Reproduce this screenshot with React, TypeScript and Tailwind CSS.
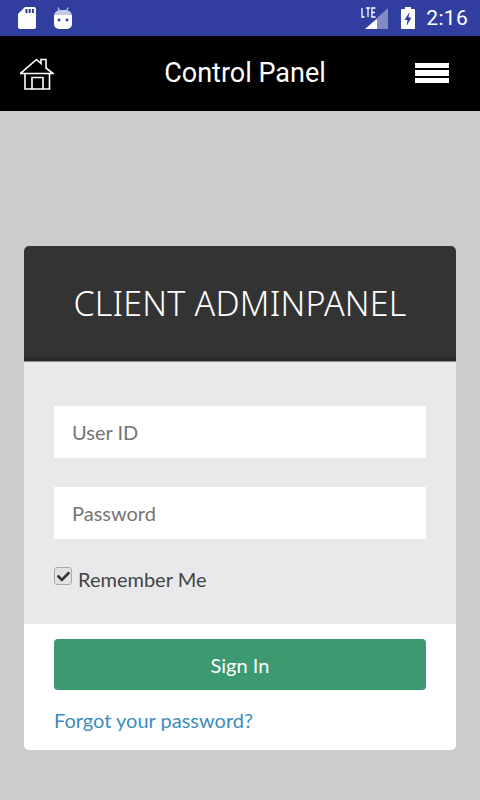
import { FaCheck } from 'react-icons/fa';

const StatusBar = () => (
  <div className="h-9 bg-[#303f9f] flex items-center justify-between pl-[18px] pr-3 text-white">
    <div className="flex items-center gap-[18px]">
      <svg width="18" height="22" viewBox="0 0 18 22" fill="#fff">
        <path d="M7 0h9a2 2 0 0 1 2 2v18a2 2 0 0 1-2 2H2a2 2 0 0 1-2-2V7z" />
        <rect x="7.5" y="2" width="2" height="4" fill="#303f9f" />
        <rect x="10.7" y="2" width="2" height="4" fill="#303f9f" />
        <rect x="13.9" y="2" width="2" height="4" fill="#303f9f" />
      </svg>
      <svg width="18" height="22" viewBox="0 0 18 22" fill="#fff">
        <path d="M4 0.5L5.5 4M14 0.5L12.5 4" stroke="#c5cae9" strokeWidth="1.2" fill="none" />
        <path d="M0 9a6 6 0 0 1 6-6h6a6 6 0 0 1 6 6z" fill="#c5cae9" />
        <path d="M0 8h18v9a5 5 0 0 1-5 5H5a5 5 0 0 1-5-5z" />
        <circle cx="5" cy="13" r="1.4" fill="#303f9f" />
        <circle cx="13" cy="13" r="1.4" fill="#303f9f" />
      </svg>
    </div>
    <div className="flex items-center">
      <svg width="27" height="22" viewBox="0 0 27 22" className="mr-[13px]">
        <path d="M27 1v21H4z" fill="#fff" fillOpacity="0.4" />
        <path d="M16 12v10H4z" fill="#fff" />
        <path d="M1 1v9h2.6M5 1h4M7 1v9M14.5 1h-3.6v9h3.6M10.9 5.5h3" stroke="#fff" strokeWidth="1.3" fill="none" />
      </svg>
      <svg width="14" height="22" viewBox="0 0 14 22" className="mr-[11px]">
        <path fillRule="evenodd" d="M4 0h6v2h3a1 1 0 0 1 1 1v18a1 1 0 0 1-1 1H1a1 1 0 0 1-1-1V3a1 1 0 0 1 1-1h3zM8.5 5L3.5 13H6.5L5.5 19L10.5 10.5H7.5z" fill="#fff" />
      </svg>
      <span className="font-['Roboto',sans-serif] text-[21px] tracking-[0.3px] leading-none">2:16</span>
    </div>
  </div>
);

const TopBar = () => (
  <div className="h-[75px] bg-black flex items-center justify-between pl-5 pr-[31px] text-white">
    <svg width="34" height="34" viewBox="0 0 34 34" fill="none" stroke="#fff" strokeWidth="1.6">
      <path d="M0.5 16.5L16.5 2.5L21 6.5V2.5H26V11L33 16.5Z" />
      <path d="M5 16.5V32H29.5V16.5" />
      <path d="M12 32V20.5H23V32" />
    </svg>
    <span className="font-['Roboto',sans-serif] text-[27px] leading-none mb-[1px] ml-[21px]">Control Panel</span>
    <div className="flex flex-col gap-[2px] w-[34px] mb-[1px]">
      <div className="h-[5.5px] bg-white" />
      <div className="h-[5.5px] bg-white" />
      <div className="h-[5.5px] bg-white" />
    </div>
  </div>
);

const App = () => {
  return (
    <div className="w-[480px] h-[800px] overflow-hidden bg-[#cccccc] font-['Lato',sans-serif] text-[20px]">
      <StatusBar />
      <TopBar />
      <div className="mx-6 mt-[135px] rounded-[5px] overflow-hidden bg-white">
        <div className="h-[115px] bg-[#333333] border-b-[4px] border-[#2a2a2a] flex items-center justify-center">
          <h1 className="font-['Noto_Sans',sans-serif] font-light text-[34px] tracking-[0.2px] text-white leading-none mt-[2px]">CLIENT ADMINPANEL</h1>
        </div>
        <div className="h-[263px] bg-[#e9e9eb] border-t border-[#8a8a8a] px-[30px] pt-[44px]">
          <div className="h-[52px] bg-white flex items-center px-[18px] text-[#757575]">User ID</div>
          <div className="h-[52px] mt-[29px] bg-white flex items-center px-[18px] text-[#757575]">Password</div>
          <div className="mt-[28px] flex items-start gap-[6px]">
            <div className="w-[18px] h-[18px] rounded-[3px] border border-[#a9a9a9] bg-[#e2e2e2] flex items-center justify-center">
              <FaCheck size={13} className="text-[#333333]" />
            </div>
            <span className="text-[#444444] leading-none mt-[2px]">Remember Me</span>
          </div>
        </div>
        <div className="h-[126px] px-[30px] pt-[15px]">
          <div className="h-[51px] rounded-[4px] bg-[#3d9970] flex items-center justify-center text-white">Sign In</div>
          <div className="mt-[16px] leading-[28px] text-[#3c8dbc]">Forgot your password?</div>
        </div>
      </div>
    </div>
  );
};

export default App;
